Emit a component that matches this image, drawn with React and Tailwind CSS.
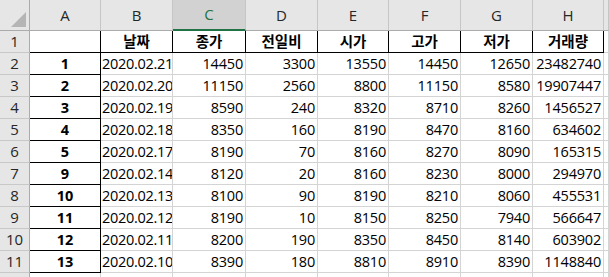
import React from 'react';

const columns = ['A', 'B', 'C', 'D', 'E', 'F', 'G', 'H', ''];
const headers = ['', '날짜', '종가', '전일비', '시가', '고가', '저가', '거래량'];

const rows = [
    [1, '2020.02.21', 14450, 3300, 13550, 14450, 12650, 23482740],
    [2, '2020.02.20', 11150, 2560, 8800, 11150, 8580, 19907447],
    [3, '2020.02.19', 8590, 240, 8320, 8710, 8260, 1456527],
    [4, '2020.02.18', 8350, 160, 8190, 8470, 8160, 634602],
    [5, '2020.02.17', 8190, 70, 8160, 8270, 8090, 165315],
    [9, '2020.02.14', 8120, 20, 8160, 8230, 8000, 294970],
    [10, '2020.02.13', 8100, 90, 8190, 8210, 8060, 455531],
    [11, '2020.02.12', 8190, 10, 8150, 8250, 7940, 566647],
    [12, '2020.02.11', 8200, 190, 8350, 8450, 8140, 603902],
    [13, '2020.02.10', 8390, 180, 8810, 8910, 8390, 1148840],
];

function Corner() {
    return (
        <div className="bg-[#e6e6e6] border-r border-b border-[#ababab] relative">
            <svg width="30" height="31" className="absolute inset-0">
                <polygon points="26,12 26,27 11,27" fill="#b5b5b5" />
            </svg>
        </div>
    );
}

function ColHeader({ label }) {
    if (label === 'C') {
        return (
            <div className="bg-[#d2d2d2] border-r border-[#c6c6c6] border-b-2 border-b-[#217346] flex items-center justify-center text-[15px] text-[#217346]">
                {label}
            </div>
        );
    }
    return (
        <div className="bg-[#e6e6e6] border-r border-[#c6c6c6] border-b border-b-[#ababab] flex items-center justify-center text-[15px] text-[#262626]">
            {label}
        </div>
    );
}

function RowHeader({ n }) {
    return (
        <div className="bg-[#e6e6e6] border-r border-r-[#ababab] border-b border-b-[#c8c8c8] flex items-center justify-center text-[15px] text-[#262626]">
            {n}
        </div>
    );
}

export default function App() {
    return (
        <div className="w-[609px] h-[277px] overflow-hidden bg-white font-['Open_Sans','Noto_Sans_CJK_KR',sans-serif] text-black">
            <div className="grid grid-cols-[30px_71px_72px_73px_72px_71px_72px_72px_71px_1fr] grid-rows-[31px_repeat(11,22px)_22px]">
                <Corner />
                {columns.map((c, i) => (
                    <ColHeader key={i} label={c} />
                ))}

                {/* row 1: titles */}
                <RowHeader n={1} />
                <div className="border-r border-b border-black" />
                {headers.slice(1).map((h, i) => (
                    <div key={i} className="border-r border-b border-black flex items-center justify-center font-bold text-[14.5px] leading-none pt-[1px]">
                        {h}
                    </div>
                ))}
                <div className="border-r border-b border-[#d4d4d4]" />

                {rows.map((r, ri) => (
                    <React.Fragment key={ri}>
                        <RowHeader n={ri + 2} />
                        <div className="border-r border-b border-black flex items-center justify-center font-bold text-[14.5px]">
                            {r[0]}
                        </div>
                        <div className="border-r border-b border-[#d4d4d4] flex items-center pl-[1px] text-[14.5px] tracking-[-0.3px] whitespace-nowrap overflow-hidden">
                            {r[1]}
                        </div>
                        {r.slice(2).map((v, ci) => (
                            <div key={ci} className="border-r border-b border-[#d4d4d4] flex items-center justify-end pr-[2px] text-[14.5px] tracking-[-0.2px] whitespace-nowrap">
                                {v}
                            </div>
                        ))}
                        <div className="border-r border-b border-[#d4d4d4]" />
                    </React.Fragment>
                ))}

                <RowHeader n="" />
                {columns.map((c, i) => (
                    <div key={i} className="border-r border-b border-[#d4d4d4]" />
                ))}
            </div>
        </div>
    );
}
